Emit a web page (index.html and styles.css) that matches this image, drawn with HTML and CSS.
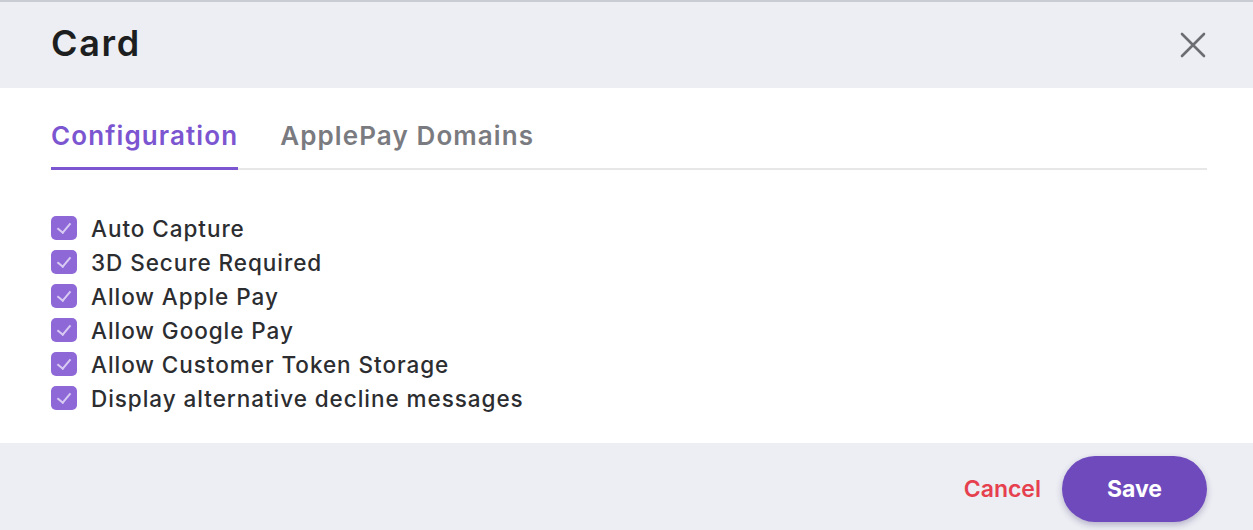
FILE: index.html
```html
<!DOCTYPE html>
<html lang="en">

<head>
    <meta charset="UTF-8">
    <meta name="viewport" content="width=device-width, initial-scale=1.0">
    <title>Card</title>
    <link rel="stylesheet" href="styles.css">
</head>

<body>
    <div class="modal">
        <div class="modal-header">
            <h1 class="title">Card</h1>
            <button class="close" aria-label="Close">
                <svg width="26" height="26" viewBox="0 0 26 26">
                    <path d="M2 2 L24 24 M24 2 L2 24" stroke="#6b6d72" stroke-width="2.6" stroke-linecap="round" fill="none"/>
                </svg>
            </button>
        </div>

        <div class="modal-body">
            <div class="tabs">
                <div class="tab active">Configuration</div>
                <div class="tab">ApplePay Domains</div>
            </div>

            <div class="options">
                <label class="option"><span class="check"></span>Auto Capture</label>
                <label class="option"><span class="check"></span>3D Secure Required</label>
                <label class="option"><span class="check"></span>Allow Apple Pay</label>
                <label class="option"><span class="check"></span>Allow Google Pay</label>
                <label class="option"><span class="check"></span>Allow Customer Token Storage</label>
                <label class="option"><span class="check"></span>Display alternative decline messages</label>
            </div>
        </div>

        <div class="modal-footer">
            <button class="cancel">Cancel</button>
            <button class="save">Save</button>
        </div>
    </div>
</body>

</html>
```

FILE: styles.css
```css
* {
    margin: 0px;
    box-sizing: border-box;
}

body {
    font-family: Inter, "Noto Sans", sans-serif;
    background: white;
    color: #2a2b2e;
}

.modal {
    width: 1253px;
    height: 530px;
    border-top: 2px solid #c9ccd3;
    display: flex;
    flex-direction: column;
}

.modal-header {
    height: 86px;
    background: #eceef3;
    display: flex;
    align-items: center;
    justify-content: space-between;
    padding: 0 47px 4px 51px;
}

.title {
    font-size: 36px;
    font-weight: 600;
    color: #1d1e20;
    letter-spacing: 1.7px;
}

.close {
    border: none;
    background: none;
    padding: 0;
    display: flex;
    margin-top: 4px;
}

.modal-body {
    height: 355px;
    padding: 32px 46px 0 51px;
}

.tabs {
    display: flex;
    gap: 42px;
    border-bottom: 2px solid #e7e7e7;
}

.tab {
    font-size: 26px;
    font-weight: 600;
    color: #7a7b80;
    letter-spacing: 1.1px;
    padding-bottom: 16px;
}

.tab.active {
    color: #7c55d0;
    border-bottom: 3px solid #7c55d0;
    margin-bottom: -2px;
}

.options {
    display: flex;
    flex-direction: column;
    margin-top: 41px;
}

.option {
    display: flex;
    align-items: center;
    gap: 14px;
    height: 34px;
    font-size: 22.5px;
    font-weight: 500;
    letter-spacing: 0.95px;
    color: #2c2d30;
}

.check {
    width: 26px;
    height: 24px;
    border-radius: 5px;
    background: #8f68d8;
    position: relative;
}

.check::after {
    content: "";
    position: absolute;
    left: 9px;
    top: 4px;
    width: 6px;
    height: 11px;
    border: solid #d8cbf3;
    border-width: 0 2px 2px 0;
    transform: rotate(40deg);
}

.modal-footer {
    flex: 1;
    background: #eceef3;
    display: flex;
    align-items: center;
    justify-content: flex-end;
    gap: 21px;
    padding: 4px 46px 0 0;
}

.cancel {
    border: none;
    background: none;
    font-family: inherit;
    font-size: 23px;
    font-weight: 600;
    color: #e6404f;
    padding: 0;
}

.save {
    border: none;
    width: 145px;
    height: 66px;
    border-radius: 33px;
    background: #6e4abd;
    color: white;
    font-family: inherit;
    font-size: 23px;
    font-weight: 700;
    box-shadow: 0 3px 6px rgba(60, 40, 110, 0.3);
}
```
